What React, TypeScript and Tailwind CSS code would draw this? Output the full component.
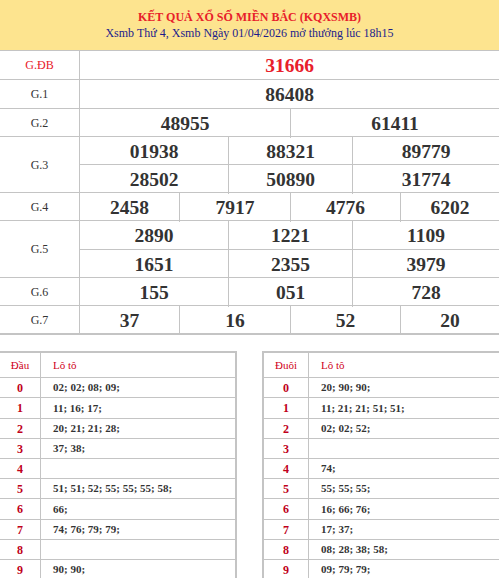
import React from "react";

const F = { fontFamily: '"Liberation Serif", "Times New Roman", serif' } as React.CSSProperties;

type Row = { label: string; h: number; sub: { cols: string; nums: string[] }[]; subH?: number[]; red?: boolean };

const C1 = "grid-cols-[100%]";
const C2 = "grid-cols-[211px_1fr]";
const C3 = "grid-cols-[149px_124px_1fr]";
const C4 = "grid-cols-[100px_111px_110px_1fr]";

const rows: Row[] = [
  { label: "G.ĐB", h: 29, red: true, sub: [{ cols: C1, nums: ["31666"] }] },
  { label: "G.1", h: 29, sub: [{ cols: C1, nums: ["86408"] }] },
  { label: "G.2", h: 28, sub: [{ cols: C2, nums: ["48955", "61411"] }] },
  {
    label: "G.3",
    h: 56,
    subH: [28, 28],
    sub: [
      { cols: C3, nums: ["01938", "88321", "89779"] },
      { cols: C3, nums: ["28502", "50890", "31774"] },
    ],
  },
  { label: "G.4", h: 28, sub: [{ cols: C4, nums: ["2458", "7917", "4776", "6202"] }] },
  {
    label: "G.5",
    h: 57,
    subH: [29, 28],
    sub: [
      { cols: C3, nums: ["2890", "1221", "1109"] },
      { cols: C3, nums: ["1651", "2355", "3979"] },
    ],
  },
  { label: "G.6", h: 28, sub: [{ cols: C3, nums: ["155", "051", "728"] }] },
  { label: "G.7", h: 28, sub: [{ cols: C4, nums: ["37", "16", "52", "20"] }] },
];

const dau = [
  "02; 02; 08; 09;",
  "11; 16; 17;",
  "20; 21; 21; 28;",
  "37; 38;",
  "",
  "51; 51; 52; 55; 55; 55; 58;",
  "66;",
  "74; 76; 79; 79;",
  "",
  "90; 90;",
];
const duoi = [
  "20; 90; 90;",
  "11; 21; 21; 51; 51;",
  "02; 02; 52;",
  "",
  "74;",
  "55; 55; 55;",
  "16; 66; 76;",
  "17; 37;",
  "08; 28; 38; 58;",
  "09; 79; 79;",
];
const lotoH = [20, 21, 20, 20, 20, 20, 21, 20, 20, 20];

function LotoTable({ title, data, first, side }: { title: string; data: string[]; first: string; side: "l" | "r" }) {
  return (
    <div
      className={
        "w-[237px] border-t-2 border-[#c4c4c4] " + (side === "l" ? "border-r-2" : "border-l-2")
      }
    >
      <div className="flex h-[24px] text-[11px] text-[#d0021b]">
        <div className={first + " flex items-center justify-center border-r border-[#c4c4c4]"}>{title}</div>
        <div className="flex flex-1 items-center pl-3">Lô tô</div>
      </div>
      {data.map((v, i) => (
        <div
          key={i}
          className="flex border-t border-[#c4c4c4]"
          style={{ height: lotoH[i] }}
        >
          <div
            className={
              first +
              " flex items-center justify-center border-r border-[#c4c4c4] text-[12px] font-bold text-[#c0001a]"
            }
          >
            {i}
          </div>
          <div className="flex flex-1 items-center pl-3 text-[11px] font-bold text-[#333333]">{v}</div>
        </div>
      ))}
    </div>
  );
}

export default function App() {
  return (
    <div className="w-[499px] h-[578px] overflow-hidden bg-white" style={F}>
      <div className="flex h-[50px] flex-col items-center bg-[#fde48f] pt-[9px]">
        <div className="text-[12px] font-bold leading-[16px] text-[#e8202a]">
          KẾT QUẢ XỔ SỐ MIỀN BẮC (KQXSMB)
        </div>
        <div className="text-[12px] leading-[16px] text-[#1c1c8c]">
          Xsmb Thứ 4, Xsmb Ngày 01/04/2026 mở thưởng lúc 18h15
        </div>
      </div>
      <div className="border-b-2 border-[#c4c4c4]">
        {rows.map((r) => (
          <div key={r.label} className="flex border-t border-[#c4c4c4]" style={{ height: r.h }}>
            <div
              className={
                "flex w-[80px] shrink-0 items-center justify-center border-r border-[#c4c4c4] text-[12px] " +
                (r.red ? "text-[#e8202a]" : "text-[#333333]")
              }
            >
              {r.label}
            </div>
            <div className="flex flex-1 flex-col">
              {r.sub.map((s, si) => (
                <div
                  key={si}
                  className={"grid " + s.cols + (si > 0 ? " border-t border-[#c4c4c4]" : "")}
                  style={{ height: r.subH ? r.subH[si] - (si > 0 ? 0 : 1) : r.h - 1 }}
                >
                  {s.nums.map((n, ni) => (
                    <div
                      key={ni}
                      className={
                        "flex items-center justify-center text-[19.5px] font-bold " +
                        (r.red ? "text-[#e8202a]" : "text-[#333333]") +
                        (ni < s.nums.length - 1 ? " border-r border-[#c4c4c4]" : "")
                      }
                    >
                      {n}
                    </div>
                  ))}
                </div>
              ))}
            </div>
          </div>
        ))}
      </div>
      <div className="mt-[16px] flex justify-between">
        <LotoTable title="Đầu" data={dau} first="w-[41px]" side="l" />
        <LotoTable title="Đuôi" data={duoi} first="w-[45px]" side="r" />
      </div>
    </div>
  );
}
